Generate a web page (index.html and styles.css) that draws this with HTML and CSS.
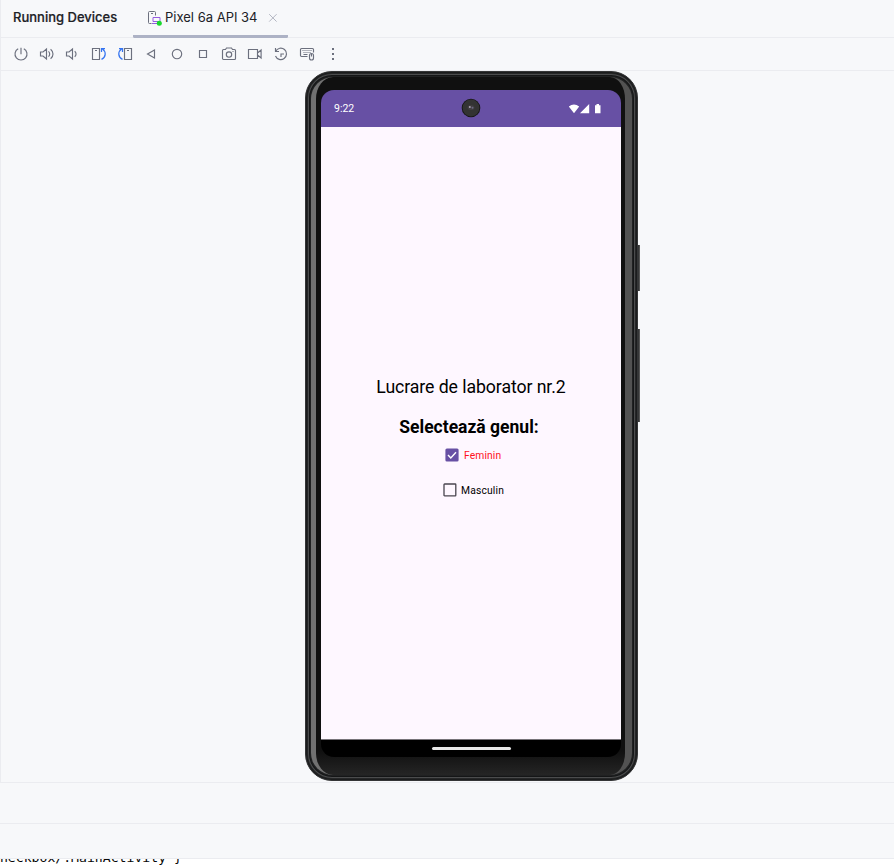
FILE: index.html
```html
<!DOCTYPE html>
<html lang="en">
<head>
<meta charset="utf-8">
<title>Running Devices</title>
<link rel="stylesheet" href="styles.css">
</head>
<body>
<section class="panel">
  <header class="tabs">
    <span class="title">Running Devices</span>
    <div class="tab">
      <svg class="tab-icon" width="16" height="16" viewBox="0 0 16 16" fill="none"><path d="M4.5 13.5h-2a1 1 0 0 1-1-1v-10a1 1 0 0 1 1-1h5a1 1 0 0 1 1 1v3M4 3.5h2" stroke="#6c707e"/><path d="M6 7.5h7v4H6zM5 13.5h5" stroke="#955ae0"/><circle cx="12.3" cy="13.2" r="2.5" fill="#19d92c"/></svg>
      <span class="tab-name">Pixel 6a API 34</span>
      <svg class="close" width="10" height="10" viewBox="0 0 10 10"><path d="M1.2 1.2l7.4 7.4M8.6 1.2L1.2 8.6" stroke="#b3b6c2" fill="none"/></svg>
    </div>
  </header>
  <nav class="toolbar">
    <svg class="ico" viewBox="0 0 16 16"><path d="M8 1.8v6.4M5.2 2.7a6 6 0 1 0 5.6 0"/></svg>
    <svg class="ico" viewBox="0 0 16 16"><path d="M1.5 6v4H4l3.5 3V3L4 6zM9.5 5.3c1.6 1.5 1.6 3.9 0 5.4M11.6 3.2c3.2 2.6 3.2 7 0 9.6"/></svg>
    <svg class="ico quiet" viewBox="0 0 16 16"><path d="M2.5 6v4H5l3.5 3V3L5 6zM10.7 5.3c1.8 1.5 1.8 3.9 0 5.4"/></svg>
    <svg class="ico" viewBox="0 0 16 16"><path d="M1.5 2.5h7v11h-7zM4 4.5h2"/><path class="blue" d="M10.5 13.4c4.6-2.2 4.9-7.6 1-10.4M10.5 6V2.5H14"/></svg>
    <svg class="ico" viewBox="0 0 16 16"><path d="M7.5 2.5h7v11h-7zM10 4.5h2"/><path class="blue" d="M5.5 13.4C.9 11.2.6 5.8 4.5 3M5.5 6V2.5H2"/></svg>
    <svg class="ico" viewBox="0 0 16 16"><path d="M11.5 4v8L4.5 8z"/></svg>
    <svg class="ico" viewBox="0 0 16 16"><circle cx="8" cy="8" r="4.7"/></svg>
    <svg class="ico" viewBox="0 0 16 16"><path d="M4.5 4.5h7v7h-7z"/></svg>
    <svg class="ico" viewBox="0 0 16 16"><path d="M2.5 3.5h2l1-1.5h5l1 1.5h2a1 1 0 0 1 1 1v8a1 1 0 0 1-1 1h-11a1 1 0 0 1-1-1v-8a1 1 0 0 1 1-1zM11.5 5.5h1"/><circle cx="8" cy="8.5" r="2.7"/></svg>
    <svg class="ico" viewBox="0 0 16 16"><path d="M1.5 3.5h9v9h-9zM10.5 7l3.6-3v8l-3.6-3"/></svg>
    <svg class="ico" viewBox="0 0 16 16"><path d="M2.5 2v3.5H6M2.7 5.3A5.7 5.7 0 1 1 2.5 10M8 11V8h3"/></svg>
    <svg class="ico" viewBox="0 0 16 16"><path d="M8.5 10.5h-6a1 1 0 0 1-1-1v-6a1 1 0 0 1 1-1h11a1 1 0 0 1 1 1v3"/><path d="M3.5 4.5h1m1 0h1m1 0h1m1 0h1m1 0h1M4.5 6.5h1m1 0h1m1 0h1m1 0h1M4.5 8.5h4"/><rect x="10.5" y="7.5" width="4" height="6.5" rx="2"/><path d="M12.5 8v2.5"/></svg>
    <svg class="ico dots" viewBox="0 0 16 16"><path d="M7 2h2v2H7zM7 7h2v2H7zM7 12h2v2H7z"/></svg>
  </nav>
  <main class="stage">
    <div class="phone">
      <div class="bezel">
        <div class="screen">
          <div class="status">
            <span class="clock">9:22</span>
            <svg class="camera" width="20" height="20" viewBox="0 0 20 20"><circle cx="10" cy="10" r="9.3" fill="#171717"/><circle cx="10" cy="10" r="8.4" fill="#333"/><ellipse cx="10" cy="9.5" rx="3.4" ry="2.6" fill="#403d40"/><circle cx="8.8" cy="9" r="1" fill="#aaa2b2"/><circle cx="11.5" cy="9.8" r="1" fill="#6c6883"/></svg>
            <svg class="signals" width="34" height="12" viewBox="0 0 34 12" fill="#fff"><path d="M.8 3.6Q6 -.6 11.2 3.6L6 10.2zM21.2 1v9.2H12zM27 2.2h1.5V1h2.5v1.2h1.5v8H27z"/></svg>
          </div>
          <div class="app">
            <div class="heading">Lucrare de laborator nr.2</div>
            <div class="question">Selectează genul:</div>
            <div class="choice female"><svg width="14" height="14" viewBox="0 0 14 14"><rect x=".4" y=".4" width="13.2" height="13.2" rx="1.5" fill="#6750a4"/><path d="M3 7l2.8 3L11 4.3" fill="none" stroke="#fff" stroke-width="1.4"/></svg><span>Feminin</span></div>
            <div class="choice male"><svg width="14" height="14" viewBox="0 0 14 14"><rect x="1" y="1" width="11.8" height="11.8" rx=".6" fill="none" stroke="#49454f" stroke-width="1.3"/></svg><span>Masculin</span></div>
          </div>
          <div class="gesture"><i></i></div>
        </div>
      </div>
      <i class="key power"></i>
      <i class="key volume"></i>
    </div>
  </main>
</section>
<div class="gap-row"></div>
<div class="tool-row"></div>
<pre class="console">checkbox/.MainActivity }</pre>
</body>
</html>
```
FILE: styles.css
```css
* { box-sizing: border-box; }
body {
  margin: 0;
  height: 866px;
  overflow: hidden;
  display: flex;
  flex-direction: column;
  background: #f7f8fa;
  font-family: Inter, sans-serif;
}
.panel {
  height: 783px;
  border-left: 1px solid #ebecf0;
  border-bottom: 1px solid #ebecf0;
  background: #f7f8fa;
}
.tabs {
  display: flex;
  height: 38px;
  padding-left: 12px;
  border-bottom: 1px solid #ebecf0;
  color: #202126;
  font-size: 13px;
  line-height: 34px;
}
.title { width: 120px; font-weight: 500; font-size: 13px; -webkit-text-stroke: .2px #202126; white-space: nowrap; }
.tab {
  display: flex;
  width: 155px;
  height: 38px;
  padding-left: 14px;
  background: linear-gradient(#adb2c5, #adb2c5) bottom / 100% 3px no-repeat;
  border-radius: 0 0 1.5px 1.5px;
}
.tab-icon { flex: none; margin-top: 10px; }
.tab-name { flex: none; width: 96px; margin-left: 2px; font-size: 13px; white-space: nowrap; }
.close { flex: none; margin: 13px 0 0 7px; }
.toolbar {
  display: flex;
  height: 33px;
  padding-left: 7px;
  border-bottom: 1px solid #ebecf0;
}
.ico {
  width: 16px;
  height: 16px;
  margin: 8px 5px;
  fill: none;
  stroke: #6c707e;
  stroke-width: 1.15;
}
.ico.quiet { margin-left: 4px; margin-right: 6px; }
.ico .blue { stroke: #3574f0; stroke-width: 1.25; }
.ico.dots { fill: #6c707e; stroke: none; }
.stage { padding-left: 304px; }
.phone {
  position: relative;
  width: 333px;
  height: 710px;
  padding: 5px 5px 0;
  border-radius: 27px;
  background: #202122;
  border: 1px solid #343536;
  box-shadow: inset 0 0 0 1px #1b1c1d, inset 0 0 0 2px #252627, inset 0 0 0 3px #4b4c4d, inset 0 0 0 4px #151617;
}
.bezel {
  width: 321px;
  height: 698px;
  padding: 13px 4px 0 5px;
  border-radius: 22px;
  border-left: 5px solid #717171;
  border-right: 7px solid #525252;
  background: linear-gradient(#101010 0 674px, #252525 698px);
}
.screen {
  width: 300px;
  height: 667px;
  overflow: hidden;
  border-radius: 13px;
}
.status {
  display: flex;
  height: 37px;
  padding-left: 13px;
  background: #6750a4;
  color: #fff;
}
.clock { width: 127px; font: 10.5px/38px Roboto, sans-serif; }
.camera { margin-top: 8px; }
.signals { margin: 13px 0 0 87px; }
.app {
  height: 613px;
  padding-top: 248px;
  background: #fef7ff;
  color: #000;
  font-family: Roboto, sans-serif;
  border-bottom: 1px solid #777379;
}
.heading { height: 24px; font-size: 17.7px; line-height: 24px; text-align: center; letter-spacing: -.08px; white-space: nowrap; }
.question { height: 24px; margin-top: 16px; padding-right: 4px; font-size: 17.5px; font-weight: 700; line-height: 24px; text-align: center; }
.choice { display: flex; height: 14px; font-size: 10.3px; line-height: 15px; letter-spacing: .12px; }
.female { margin: 9px 0 0 124px; color: #ff101c; }
.female span { margin-left: 5px; }
.male { margin: 21px 0 0 122px; }
.male span { margin-left: 4px; letter-spacing: .18px; }
.gesture { height: 17px; padding: 7px 0 0 110.5px; background: #000; }
.gesture i { display: block; width: 79px; height: 3px; border-radius: 2px; background: #e8e8e8; }
.key {
  position: absolute;
  right: -3px;
  width: 3px;
  background: #353637;
  border-right: 1px solid #555;
}
.power { top: 173px; height: 46px; }
.volume { top: 257px; height: 93px; }
.gap-row { height: 41px; border-bottom: 1px solid #ebecf0; }
.tool-row { height: 35px; border-bottom: 1px solid #ebecf0; }
.console {
  display: flex;
  align-items: flex-end;
  height: 7px;
  margin: 0;
  overflow: hidden;
  background: #fff;
  color: #080808;
  font: 13.15px/16px "DejaVu Sans Mono", monospace;
  text-indent: -8px;
}
```
